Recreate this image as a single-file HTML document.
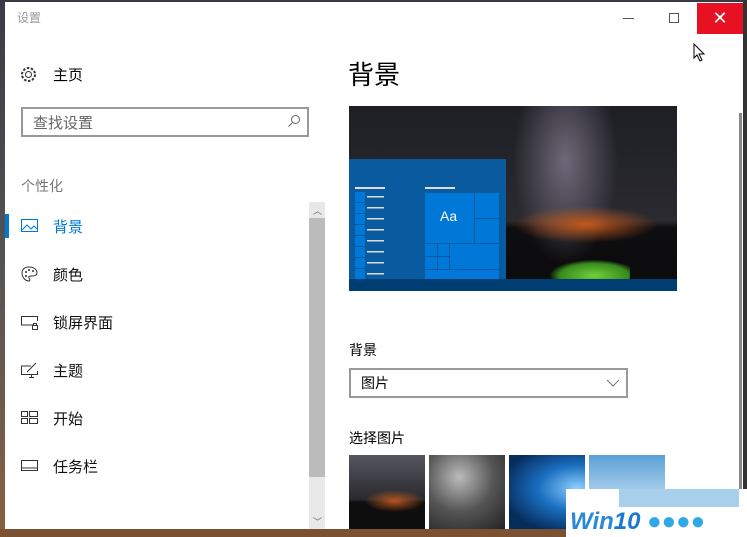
<!DOCTYPE html>
<html><head><meta charset="utf-8"><style>
*{margin:0;padding:0;box-sizing:border-box}
body{width:747px;height:537px;overflow:hidden;position:relative;background:linear-gradient(180deg,#3a3a44 0%,#555 50%,#8a6040 100%);font-family:"Liberation Sans","Noto Sans CJK SC",sans-serif}
.a{position:absolute}
.win{left:5px;top:2px;width:738px;height:527px;background:#fff}
.nav{left:53px;font-size:15px;color:#111}
</style></head><body>
<div class="a" style="left:0;top:529px;width:747px;height:8px;background:#7a5232"></div>
<div class="a" style="left:743px;top:0;width:4px;height:537px;background:#333"></div>
<div class="a win"></div>
<div class="a" style="left:17px;top:9px;font-size:12px;color:#999">设置</div>
<div class="a" style="left:623px;top:18px;width:11px;height:1px;background:#555"></div>
<div class="a" style="left:669px;top:13px;width:10px;height:10px;border:1px solid #555"></div>
<div class="a" style="left:697px;top:3px;width:46px;height:31px;background:#e81123;color:#fff;font-size:18px;text-align:center;line-height:30px">✕</div>
<svg class="a" style="left:693px;top:43px" width="14" height="20"><path d="M1 1 L1 15 L4 12 L7 18 L9 17 L6 11 L11 11 Z" fill="#fff" stroke="#000"/></svg>
<svg class="a" style="left:20px;top:66px" width="17" height="17" viewBox="0 0 17 17"><circle cx="8.5" cy="8.5" r="3" fill="none" stroke="#333"/><circle cx="8.5" cy="8.5" r="6.5" fill="none" stroke="#333" stroke-dasharray="2.5 1.6" stroke-width="2"/></svg>
<div class="a nav" style="top:64px;color:#000">主页</div>
<div class="a" style="left:21px;top:107px;width:288px;height:30px;border:2px solid #999"></div>
<div class="a" style="left:33px;top:112px;font-size:15px;color:#666">查找设置</div>
<svg class="a" style="left:287px;top:114px" width="14" height="14"><circle cx="8.5" cy="5.5" r="4" fill="none" stroke="#666"/><path d="M5.5 8.5 L1.5 12.5" stroke="#666"/></svg>
<div class="a" style="left:21px;top:176px;font-size:14px;color:#777">个性化</div>
<div class="a" style="left:5px;top:214px;width:4px;height:24px;background:#0078d7"></div>
<svg class="a" style="left:21px;top:219px" width="17" height="14"><rect x="0.5" y="0.5" width="16" height="12" fill="none" stroke="#0078d7"/><path d="M1 11 L6 6 L10 10 L13 7 L16 10" fill="none" stroke="#0078d7"/></svg>
<div class="a nav" style="top:216px;color:#0078d7">背景</div>
<svg class="a" style="left:21px;top:266px" width="17" height="16"><path d="M8 1 C3 1 1 4 1 7 C1 11 4 15 8 15 C9 15 9 13 8 12 C7 10 9 10 11 10 C14 10 16 9 16 7 C16 3 12 1 8 1Z" fill="none" stroke="#333"/><circle cx="5" cy="6" r="1" fill="#333"/><circle cx="8" cy="4" r="1" fill="#333"/><circle cx="12" cy="5" r="1" fill="#333"/><circle cx="5" cy="10" r="1" fill="#333"/></svg>
<div class="a nav" style="top:264px">颜色</div>
<svg class="a" style="left:21px;top:315px" width="17" height="15"><path d="M12 10 L0.5 10 L0.5 1.5 L16.5 1.5 L16.5 6" fill="none" stroke="#333"/><rect x="11.5" y="10.5" width="5" height="4" fill="none" stroke="#333"/><path d="M12.5 10.5 V8.5 H15.5 V10.5" fill="none" stroke="#333"/></svg>
<div class="a nav" style="top:312px">锁屏界面</div>
<svg class="a" style="left:21px;top:362px" width="17" height="17"><path d="M10 4 L0.5 4 L0.5 12.5 L16.5 12.5 L16.5 9" fill="none" stroke="#333"/><path d="M8 15.5 H13 M10.5 12.5 V15.5 M6 10 L15 1" stroke="#333"/></svg>
<div class="a nav" style="top:360px">主题</div>
<svg class="a" style="left:21px;top:411px" width="17" height="14"><rect x="0.5" y="0.5" width="6" height="5" fill="none" stroke="#333"/><rect x="8.5" y="0.5" width="8" height="5" fill="none" stroke="#333"/><rect x="0.5" y="7.5" width="6" height="5" fill="none" stroke="#333"/><rect x="8.5" y="7.5" width="8" height="5" fill="none" stroke="#333"/></svg>
<div class="a nav" style="top:408px">开始</div>
<svg class="a" style="left:21px;top:460px" width="17" height="12"><rect x="0.5" y="0.5" width="16" height="10" fill="none" stroke="#333"/><path d="M1 8 H16" stroke="#333"/></svg>
<div class="a nav" style="top:456px">任务栏</div>
<div class="a" style="left:309px;top:202px;width:16px;height:327px;background:#e8e8e8"></div>
<div class="a" style="left:309px;top:218px;width:16px;height:259px;background:#bbb"></div>
<div class="a" style="left:313px;top:204px;font-size:9px;color:#666">︿</div>
<div class="a" style="left:313px;top:515px;font-size:9px;color:#666">﹀</div>
<div class="a" style="left:348px;top:55px;font-size:26px;color:#000">背景</div>
<div class="a" style="left:349px;top:106px;width:328px;height:185px;background:radial-gradient(ellipse 22% 10% at 72% 64%,#c2581c 0%,transparent 100%),radial-gradient(ellipse 16% 55% at 66% 30%,#6e6878 0%,transparent 100%),linear-gradient(180deg,#1e1f25 0%,#2a2a30 62%,#0e0e10 66%,#0b0b0c 100%)"></div>
<div class="a" style="left:550px;top:260px;width:80px;height:24px;background:radial-gradient(ellipse at 55% 65%,#6fd13a 0%,#3a8a1e 55%,transparent 72%)"></div>
<div class="a" style="left:349px;top:159px;width:157px;height:121px;background:#0a5aa0"></div>
<div class="a" style="left:349px;top:279px;width:328px;height:12px;background:#003d73"></div>
<div class="a" style="left:355px;top:187px;width:30px;height:2px;background:#ddd"></div>
<div class="a" style="left:425px;top:187px;width:30px;height:2px;background:#ddd"></div>
<div class="a" style="left:355px;top:192px;width:10px;height:87px;background:repeating-linear-gradient(180deg,#0078d7 0 10px,#0a5aa0 10px 11px)"></div>
<div class="a" style="left:367px;top:196px;width:17px;height:80px;background:repeating-linear-gradient(180deg,#ddd 0 1.5px,transparent 1.5px 11px)"></div>
<div class="a" style="left:425px;top:193px;width:74px;height:86px;background:#0078d7"></div>
<div class="a" style="left:474px;top:193px;width:1px;height:50px;background:#0a5aa0"></div>
<div class="a" style="left:474px;top:218px;width:25px;height:1px;background:#0a5aa0"></div>
<div class="a" style="left:425px;top:243px;width:74px;height:1px;background:#0a5aa0"></div>
<div class="a" style="left:425px;top:269px;width:74px;height:1px;background:#0a5aa0"></div>
<div class="a" style="left:449px;top:243px;width:1px;height:26px;background:#0a5aa0"></div>
<div class="a" style="left:437px;top:243px;width:1px;height:26px;background:#0a5aa0"></div>
<div class="a" style="left:425px;top:256px;width:24px;height:1px;background:#0a5aa0"></div>
<div class="a" style="left:440px;top:208px;font-size:14px;color:#fff">Aa</div>
<div class="a" style="left:739px;top:113px;width:3px;height:416px;background:#888"></div>
<div class="a" style="left:349px;top:340px;font-size:14px;color:#000">背景</div>
<div class="a" style="left:349px;top:368px;width:279px;height:30px;border:2px solid #999"></div>
<div class="a" style="left:361px;top:373px;font-size:14px;color:#000">图片</div>
<svg class="a" style="left:606px;top:379px" width="14" height="8"><path d="M1 1 L7 7 L13 1" fill="none" stroke="#777"/></svg>
<div class="a" style="left:349px;top:428px;font-size:14px;color:#000">选择图片</div>
<div class="a" style="left:349px;top:455px;width:76px;height:74px;background:radial-gradient(ellipse 40% 15% at 60% 62%,#b5551e,transparent),linear-gradient(180deg,#555560,#2a2a2e 60%,#0e0e0e 64%)"></div>
<div class="a" style="left:429px;top:455px;width:76px;height:74px;background:radial-gradient(circle at 40% 30%,#bbb,#555 50%,#222)"></div>
<div class="a" style="left:509px;top:455px;width:76px;height:74px;background:radial-gradient(ellipse at 90% 45%,#8fd0ff,#1a6fc0 40%,#062c5c 80%)"></div>
<div class="a" style="left:589px;top:455px;width:76px;height:74px;background:linear-gradient(180deg,#5aa0d8,#b8d8ee 60%,#4a7040)"></div>
<div class="a" style="left:566px;top:489px;width:181px;height:48px;background:#fff"></div>
<div class="a" style="left:619px;top:489px;width:120px;height:18px;background:#a8d0ec"></div>
<div class="a" style="left:570px;top:508px;font-size:24px;font-weight:bold;font-style:italic;color:#2a8ad8">Win<span style="color:#1a78d0">10</span> <span style="color:#30a8e8">●●●●</span></div>
</body></html>
